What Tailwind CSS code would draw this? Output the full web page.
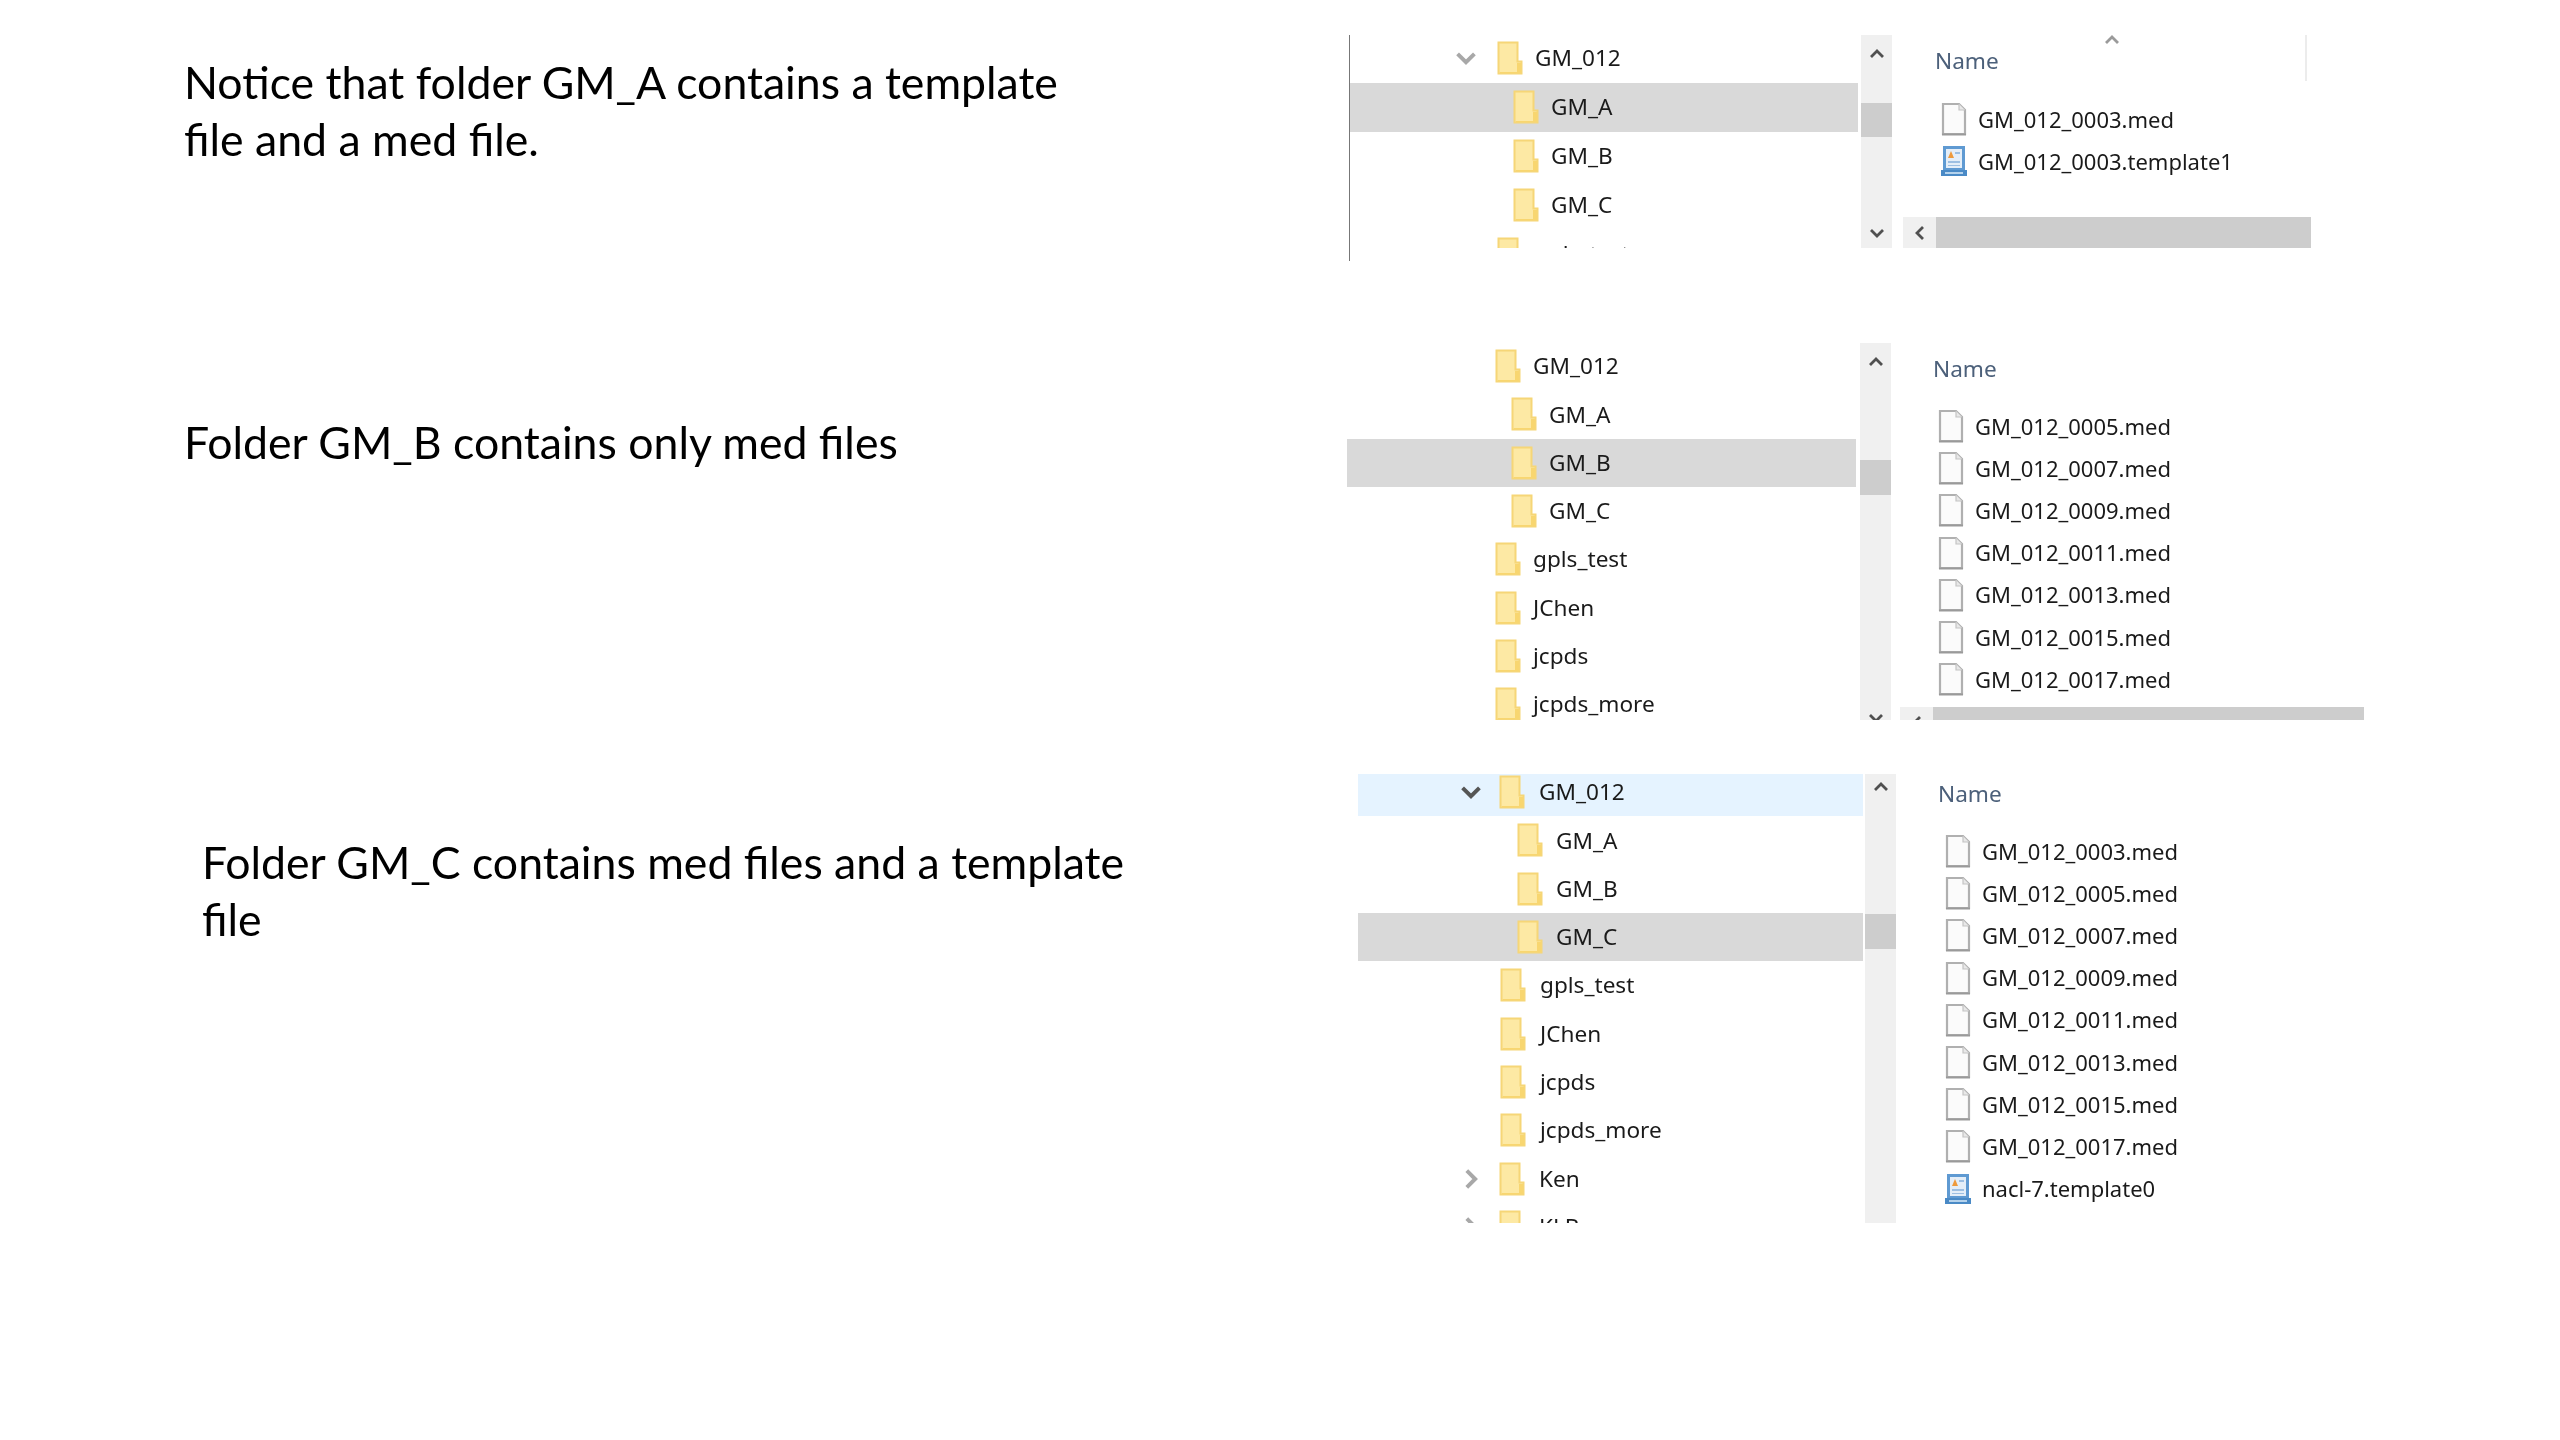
<!DOCTYPE html>
<html lang="en">
<head>
    <meta charset="UTF-8">
    <title>Folder contents</title>
    <script src="https://cdn.jsdelivr.net/npm/@tailwindcss/browser@4"></script>
</head>
<body class="bg-white">
    <!-- shared icons -->
    <svg class="hidden">
        <symbol id="folder" viewBox="0 0 26 34">
            <path d="M1.5 1.5h19v19h4v12h-23z" fill="#fde9a4" stroke="#f6d677" stroke-width="2"/>
            <path d="M20 22h4v10H3v-1h17z" fill="#f8d670"/>
        </symbol>
        <symbol id="file" viewBox="0 0 26 34">
            <path d="M2 2h16l6 6v24H2z" fill="#fbfbfb" stroke="#b0b0b0" stroke-width="2.2"/>
            <path d="M18 2v6h6" fill="#e8e8e8" stroke="#c4c4c4" stroke-width="1.2"/>
            <path d="M1 32.5h24" stroke="#9a9a9a" stroke-width="2"/>
        </symbol>
        <symbol id="template" viewBox="0 0 28 32">
            <path d="M3 1h22v27H3z" fill="#5f9ad2"/>
            <path d="M6 4h16v19H6z" fill="#e4eef8"/>
            <path d="M8 13l3-7 3 7z" fill="#ee9a3c"/>
            <path d="M15 7h5v2h-5zM8 16h12v2H8zM8 20h12v1H8z" fill="#9dbfe2"/>
            <path d="M1 25h26v6H1z" fill="#4a8ac6"/>
            <path d="M5 27h18v2H5z" fill="#b4d2ec"/>
        </symbol>
        <symbol id="up" viewBox="0 0 16 10">
            <path d="M2 8l6-6 6 6" fill="none" stroke="currentColor" stroke-width="2.8"/>
        </symbol>
        <symbol id="down" viewBox="0 0 16 10">
            <path d="M2 2l6 6 6-6" fill="none" stroke="currentColor" stroke-width="2.8"/>
        </symbol>
    </svg>

    <div class="w-[2560px] h-[1440px] overflow-hidden text-[#1a1a1a] font-['Noto_Sans',sans-serif] blur-[0.7px]">

        <!-- GM_A -->
        <section class="flex h-[226px] mt-[35px]">
            <div class="w-[1349px] shrink-0 pl-[184px] pt-[18px] text-[44.6px] leading-[57px] text-black font-['Lato',sans-serif] whitespace-nowrap">
                Notice that folder GM_A contains a template<br>file and a med file.
            </div>
            <div class="border-l border-[#777] h-[226px]">
                <div class="flex h-[213px] overflow-hidden">
                    <div class="w-[508px] shrink-0 -mt-[1px] text-[22.6px]">
                        <div class="flex items-center h-[48.8px] pl-[104px]">
                            <svg class="w-[24px] h-[14px] text-[#a8a8a8]"><use href="#down"/></svg>
                            <svg class="w-[26px] h-[34px] ml-[19px]"><use href="#folder"/></svg>
                            <span class="ml-[12px]">GM_012</span>
                        </div>
                        <div class="flex items-center h-[48.8px] pl-[163px] bg-[#d9d9d9]">
                            <svg class="w-[26px] h-[34px]"><use href="#folder"/></svg>
                            <span class="ml-[12px]">GM_A</span>
                        </div>
                        <div class="flex items-center h-[48.8px] pl-[163px]">
                            <svg class="w-[26px] h-[34px]"><use href="#folder"/></svg>
                            <span class="ml-[12px]">GM_B</span>
                        </div>
                        <div class="flex items-center h-[48.8px] pl-[163px]">
                            <svg class="w-[26px] h-[34px]"><use href="#folder"/></svg>
                            <span class="ml-[12px]">GM_C</span>
                        </div>
                        <div class="flex items-center h-[48.8px] pl-[147px]">
                            <svg class="w-[26px] h-[34px]"><use href="#folder"/></svg>
                            <span class="ml-[12px]">gpls_test</span>
                        </div>
                    </div>
                    <div class="w-[31px] ml-[3px] shrink-0 bg-[#f0f0f0]">
                        <div class="flex items-center justify-center h-[38px] text-[#505050]"><svg class="w-[16px] h-[10px]"><use href="#up"/></svg></div>
                        <div class="h-[34px] mt-[30px] bg-[#cdcdcd]"></div>
                        <div class="flex items-center justify-center h-[38px] mt-[77px] text-[#505050]"><svg class="w-[16px] h-[10px]"><use href="#down"/></svg></div>
                    </div>
                    <div class="w-[419px] shrink-0 text-[22px]">
                        <div class="relative flex items-center h-[51px] pl-[43px] text-[22.6px] text-[#4c607a]">
                            Name
                            <svg class="absolute left-[212px] top-[0px] w-[16px] h-[10px] text-[#9a9a9a]"><use href="#up"/></svg>
                            <div class="absolute left-[413px] top-0 w-[2px] h-[46px] bg-[#ececec]"></div>
                        </div>
                        <div class="mt-[12px]">
                            <div class="flex items-center h-[42.2px] pl-[49px]">
                                <svg class="w-[26px] h-[34px]"><use href="#file"/></svg>
                                <span class="ml-[11px]">GM_012_0003.med</span>
                            </div>
                            <div class="flex items-center h-[42.2px] pl-[48px]">
                                <svg class="w-[28px] h-[32px]"><use href="#template"/></svg>
                                <span class="ml-[10px]">GM_012_0003.template1</span>
                            </div>
                        </div>
                        <div class="flex h-[31px] mt-[35px] ml-[11px] bg-[#f0f0f0]">
                            <div class="flex items-center justify-center w-[33px] text-[#505050]"><svg class="w-[16px] h-[10px] rotate-90"><use href="#down"/></svg></div>
                            <div class="flex-1 bg-[#cdcdcd]"></div>
                        </div>
                    </div>
                </div>
            </div>
        </section>

        <!-- GM_B -->
        <section class="flex h-[377px] mt-[82px]">
            <div class="w-[1347px] shrink-0 pl-[184px] pt-[70px] text-[44.6px] leading-[57px] text-black font-['Lato',sans-serif] whitespace-nowrap">
                Folder GM_B contains only med files
            </div>
            <div class="flex h-[377px] overflow-hidden">
                <div class="w-[509px] shrink-0 -mt-[1px] text-[22.6px]">
                    <div class="flex items-center h-[48.3px] pl-[148px]">
                        <svg class="w-[26px] h-[34px]"><use href="#folder"/></svg>
                        <span class="ml-[12px]">GM_012</span>
                    </div>
                    <div class="flex items-center h-[48.3px] pl-[164px]">
                        <svg class="w-[26px] h-[34px]"><use href="#folder"/></svg>
                        <span class="ml-[12px]">GM_A</span>
                    </div>
                    <div class="flex items-center h-[48.3px] pl-[164px] bg-[#d9d9d9]">
                        <svg class="w-[26px] h-[34px]"><use href="#folder"/></svg>
                        <span class="ml-[12px]">GM_B</span>
                    </div>
                    <div class="flex items-center h-[48.3px] pl-[164px]">
                        <svg class="w-[26px] h-[34px]"><use href="#folder"/></svg>
                        <span class="ml-[12px]">GM_C</span>
                    </div>
                    <div class="flex items-center h-[48.3px] pl-[148px]">
                        <svg class="w-[26px] h-[34px]"><use href="#folder"/></svg>
                        <span class="ml-[12px]">gpls_test</span>
                    </div>
                    <div class="flex items-center h-[48.3px] pl-[148px]">
                        <svg class="w-[26px] h-[34px]"><use href="#folder"/></svg>
                        <span class="ml-[12px]">JChen</span>
                    </div>
                    <div class="flex items-center h-[48.3px] pl-[148px]">
                        <svg class="w-[26px] h-[34px]"><use href="#folder"/></svg>
                        <span class="ml-[12px]">jcpds</span>
                    </div>
                    <div class="flex items-center h-[48.3px] pl-[148px]">
                        <svg class="w-[26px] h-[34px]"><use href="#folder"/></svg>
                        <span class="ml-[12px]">jcpds_more</span>
                    </div>
                </div>
                <div class="w-[31px] ml-[4px] shrink-0 bg-[#f0f0f0]">
                    <div class="flex items-center justify-center h-[38px] text-[#505050]"><svg class="w-[16px] h-[10px]"><use href="#up"/></svg></div>
                    <div class="h-[35px] mt-[79px] bg-[#cdcdcd]"></div>
                    <div class="flex items-center justify-center h-[38px] mt-[204px] text-[#505050]"><svg class="w-[16px] h-[10px]"><use href="#down"/></svg></div>
                </div>
                <div class="w-[473px] shrink-0 text-[22px]">
                    <div class="flex items-center h-[51px] pl-[42px] text-[22.6px] text-[#4c607a]">Name</div>
                    <div class="mt-[11px]">
                        <div class="flex items-center h-[42.2px] pl-[47px]">
                            <svg class="w-[26px] h-[34px]"><use href="#file"/></svg>
                            <span class="ml-[11px]">GM_012_0005.med</span>
                        </div>
                        <div class="flex items-center h-[42.2px] pl-[47px]">
                            <svg class="w-[26px] h-[34px]"><use href="#file"/></svg>
                            <span class="ml-[11px]">GM_012_0007.med</span>
                        </div>
                        <div class="flex items-center h-[42.2px] pl-[47px]">
                            <svg class="w-[26px] h-[34px]"><use href="#file"/></svg>
                            <span class="ml-[11px]">GM_012_0009.med</span>
                        </div>
                        <div class="flex items-center h-[42.2px] pl-[47px]">
                            <svg class="w-[26px] h-[34px]"><use href="#file"/></svg>
                            <span class="ml-[11px]">GM_012_0011.med</span>
                        </div>
                        <div class="flex items-center h-[42.2px] pl-[47px]">
                            <svg class="w-[26px] h-[34px]"><use href="#file"/></svg>
                            <span class="ml-[11px]">GM_012_0013.med</span>
                        </div>
                        <div class="flex items-center h-[42.2px] pl-[47px]">
                            <svg class="w-[26px] h-[34px]"><use href="#file"/></svg>
                            <span class="ml-[11px]">GM_012_0015.med</span>
                        </div>
                        <div class="flex items-center h-[42.2px] pl-[47px]">
                            <svg class="w-[26px] h-[34px]"><use href="#file"/></svg>
                            <span class="ml-[11px]">GM_012_0017.med</span>
                        </div>
                    </div>
                    <div class="flex h-[31px] mt-[7px] ml-[9px] bg-[#f0f0f0]">
                        <div class="flex items-center justify-center w-[33px] text-[#505050]"><svg class="w-[16px] h-[10px] rotate-90"><use href="#down"/></svg></div>
                        <div class="flex-1 bg-[#cdcdcd]"></div>
                    </div>
                </div>
            </div>
        </section>

        <!-- GM_C -->
        <section class="flex h-[449px] mt-[54px]">
            <div class="w-[1358px] shrink-0 pl-[202px] pt-[59px] text-[44.6px] leading-[57px] text-black font-['Lato',sans-serif] whitespace-nowrap">
                Folder GM_C contains med files and a template<br>file
            </div>
            <div class="flex h-[449px] overflow-hidden">
                <div class="w-[505px] shrink-0 -mt-[6px] text-[22.6px]">
                    <div class="flex items-center h-[48.3px] pl-[101px] bg-[#e5f3ff]">
                        <svg class="w-[24px] h-[14px] text-[#555]"><use href="#down"/></svg>
                        <svg class="w-[26px] h-[34px] ml-[16px]"><use href="#folder"/></svg>
                        <span class="ml-[14px]">GM_012</span>
                    </div>
                    <div class="flex items-center h-[48.3px] pl-[159px]">
                        <svg class="w-[26px] h-[34px]"><use href="#folder"/></svg>
                        <span class="ml-[13px]">GM_A</span>
                    </div>
                    <div class="flex items-center h-[48.3px] pl-[159px]">
                        <svg class="w-[26px] h-[34px]"><use href="#folder"/></svg>
                        <span class="ml-[13px]">GM_B</span>
                    </div>
                    <div class="flex items-center h-[48.3px] pl-[159px] bg-[#d9d9d9]">
                        <svg class="w-[26px] h-[34px]"><use href="#folder"/></svg>
                        <span class="ml-[13px]">GM_C</span>
                    </div>
                    <div class="flex items-center h-[48.3px] pl-[142px]">
                        <svg class="w-[26px] h-[34px]"><use href="#folder"/></svg>
                        <span class="ml-[14px]">gpls_test</span>
                    </div>
                    <div class="flex items-center h-[48.3px] pl-[142px]">
                        <svg class="w-[26px] h-[34px]"><use href="#folder"/></svg>
                        <span class="ml-[14px]">JChen</span>
                    </div>
                    <div class="flex items-center h-[48.3px] pl-[142px]">
                        <svg class="w-[26px] h-[34px]"><use href="#folder"/></svg>
                        <span class="ml-[14px]">jcpds</span>
                    </div>
                    <div class="flex items-center h-[48.3px] pl-[142px]">
                        <svg class="w-[26px] h-[34px]"><use href="#folder"/></svg>
                        <span class="ml-[14px]">jcpds_more</span>
                    </div>
                    <div class="flex items-center h-[48.3px] pl-[101px]">
                        <svg class="w-[24px] h-[14px] -rotate-90 text-[#a8a8a8]"><use href="#down"/></svg>
                        <svg class="w-[26px] h-[34px] ml-[16px]"><use href="#folder"/></svg>
                        <span class="ml-[14px]">Ken</span>
                    </div>
                    <div class="flex items-center h-[48.3px] pl-[101px]">
                        <svg class="w-[24px] h-[14px] -rotate-90 text-[#a8a8a8]"><use href="#down"/></svg>
                        <svg class="w-[26px] h-[34px] ml-[16px]"><use href="#folder"/></svg>
                        <span class="ml-[14px]">KLB</span>
                    </div>
                </div>
                <div class="w-[31px] ml-[2px] shrink-0 bg-[#f0f0f0]">
                    <div class="flex items-center justify-center h-[26px] text-[#505050]"><svg class="w-[16px] h-[10px]"><use href="#up"/></svg></div>
                    <div class="h-[35px] mt-[114px] bg-[#cdcdcd]"></div>
                </div>
                <div class="w-[460px] shrink-0 text-[22px]">
                    <div class="flex items-center h-[39px] pl-[42px] text-[22.6px] text-[#4c607a]">Name</div>
                    <div class="mt-[17px]">
                        <div class="flex items-center h-[42.2px] pl-[49px]">
                            <svg class="w-[26px] h-[34px]"><use href="#file"/></svg>
                            <span class="ml-[11px]">GM_012_0003.med</span>
                        </div>
                        <div class="flex items-center h-[42.2px] pl-[49px]">
                            <svg class="w-[26px] h-[34px]"><use href="#file"/></svg>
                            <span class="ml-[11px]">GM_012_0005.med</span>
                        </div>
                        <div class="flex items-center h-[42.2px] pl-[49px]">
                            <svg class="w-[26px] h-[34px]"><use href="#file"/></svg>
                            <span class="ml-[11px]">GM_012_0007.med</span>
                        </div>
                        <div class="flex items-center h-[42.2px] pl-[49px]">
                            <svg class="w-[26px] h-[34px]"><use href="#file"/></svg>
                            <span class="ml-[11px]">GM_012_0009.med</span>
                        </div>
                        <div class="flex items-center h-[42.2px] pl-[49px]">
                            <svg class="w-[26px] h-[34px]"><use href="#file"/></svg>
                            <span class="ml-[11px]">GM_012_0011.med</span>
                        </div>
                        <div class="flex items-center h-[42.2px] pl-[49px]">
                            <svg class="w-[26px] h-[34px]"><use href="#file"/></svg>
                            <span class="ml-[11px]">GM_012_0013.med</span>
                        </div>
                        <div class="flex items-center h-[42.2px] pl-[49px]">
                            <svg class="w-[26px] h-[34px]"><use href="#file"/></svg>
                            <span class="ml-[11px]">GM_012_0015.med</span>
                        </div>
                        <div class="flex items-center h-[42.2px] pl-[49px]">
                            <svg class="w-[26px] h-[34px]"><use href="#file"/></svg>
                            <span class="ml-[11px]">GM_012_0017.med</span>
                        </div>
                        <div class="flex items-center h-[42.2px] pl-[48px]">
                            <svg class="w-[28px] h-[32px]"><use href="#template"/></svg>
                            <span class="ml-[10px]">nacl-7.template0</span>
                        </div>
                    </div>
                </div>
            </div>
        </section>
    </div>
</body>
</html>
